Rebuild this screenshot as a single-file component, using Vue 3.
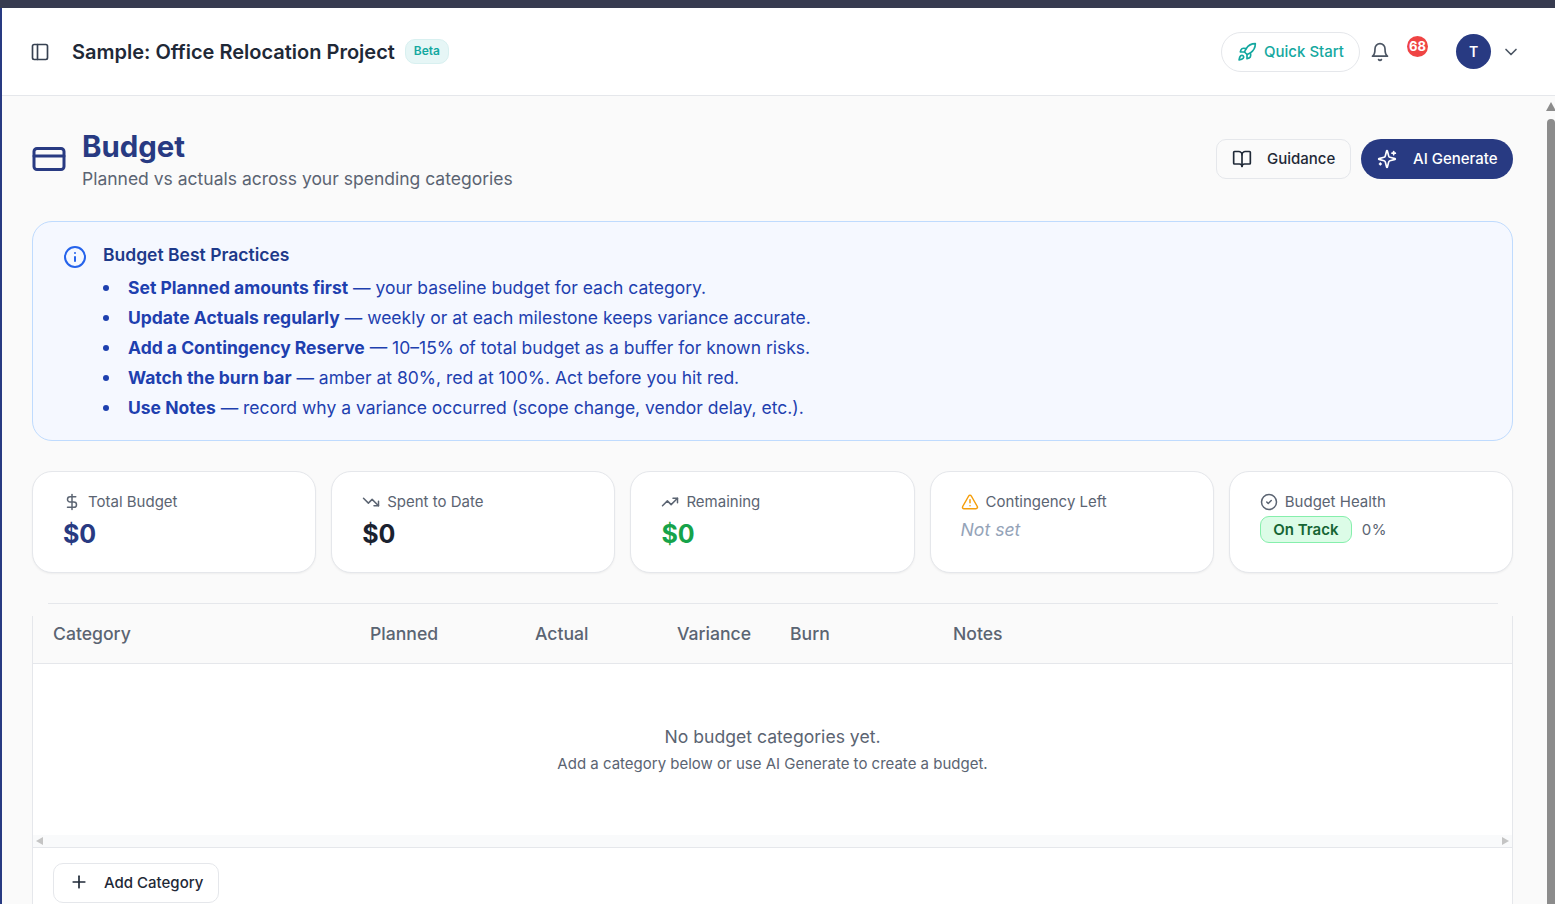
<template>
  <div class="app">
    <div class="top-strip"></div>
    <div class="shell">
      <header class="header">
        <div class="header-left">
          <svg class="ico panel-ico" viewBox="0 0 24 24"><rect x="3" y="3" width="18" height="18" rx="2" /><path d="M9 3v18" /></svg>
          <h1 class="project-title">Sample: Office Relocation Project</h1>
          <span class="beta">Beta</span>
        </div>
        <div class="header-right">
          <button class="quick-start">
            <svg class="ico rocket" viewBox="0 0 24 24"><path v-for="d in icons.rocket" :key="d" :d="d" /></svg>
            Quick Start
          </button>
          <div class="bell">
            <svg class="ico bell-ico" viewBox="0 0 24 24"><path v-for="d in icons.bell" :key="d" :d="d" /></svg>
            <span class="bell-count">68</span>
          </div>
          <div class="avatar">T</div>
          <svg class="ico chevron" viewBox="0 0 24 24"><path d="m6 9 6 6 6-6" /></svg>
        </div>
      </header>

      <div class="body-row">
        <main class="page">
          <section class="page-head">
            <div class="page-head-left">
              <svg class="ico card-ico" viewBox="0 0 24 24"><rect x="2" y="5" width="20" height="14" rx="2" /><path d="M2 10h20" /></svg>
              <div class="page-head-text">
                <h2 class="page-title">Budget</h2>
                <p class="page-sub">Planned vs actuals across your spending categories</p>
              </div>
            </div>
            <div class="page-actions">
              <button class="btn-guidance">
                <svg class="ico" viewBox="0 0 24 24"><path v-for="d in icons.book" :key="d" :d="d" /></svg>
                Guidance
              </button>
              <button class="btn-ai">
                <svg class="ico" viewBox="0 0 24 24"><path v-for="d in icons.sparkles" :key="d" :d="d" /></svg>
                AI Generate
              </button>
            </div>
          </section>

          <section class="tips">
            <svg class="ico info-ico" viewBox="0 0 24 24"><circle cx="12" cy="12" r="10" /><path d="M12 16v-4" /><path d="M12 8h.01" /></svg>
            <div>
              <h3 class="tips-title">Budget Best Practices</h3>
              <ul class="tips-list">
                <li v-for="tip in tips" :key="tip.lead"><strong>{{ tip.lead }}</strong> — {{ tip.rest }}</li>
              </ul>
            </div>
          </section>

          <section class="stats">
            <div class="stat" v-for="stat in stats" :key="stat.label">
              <div class="stat-label">
                <svg class="ico stat-ico" :class="stat.iconClass" viewBox="0 0 24 24"><path v-for="d in stat.icon" :key="d" :d="d" /></svg>
                {{ stat.label }}
              </div>
              <div v-if="stat.value" class="stat-value" :class="stat.valueClass">{{ stat.value }}</div>
              <div v-else-if="stat.empty" class="stat-empty">{{ stat.empty }}</div>
              <div v-else class="stat-health">
                <span class="on-track">On Track</span>
                <span class="percent">0%</span>
              </div>
            </div>
          </section>

          <div class="table-rule"></div>
          <section class="table-card">
            <div class="table-head">
              <span v-for="col in columns" :key="col">{{ col }}</span>
            </div>
            <div class="table-empty">
              <p class="empty-main">No budget categories yet.</p>
              <p class="empty-sub">Add a category below or use AI Generate to create a budget.</p>
            </div>
            <div class="h-scroll">
              <span class="arrow-left"></span>
              <span class="arrow-right"></span>
            </div>
            <div class="table-foot">
              <button class="btn-add">
                <svg class="ico" viewBox="0 0 24 24"><path d="M5 12h14" /><path d="M12 5v14" /></svg>
                Add Category
              </button>
            </div>
          </section>
        </main>

        <div class="v-scroll">
          <span class="arrow-up"></span>
          <span class="thumb"></span>
        </div>
      </div>
    </div>
  </div>
</template>

<script setup>
const icons = {
  rocket: [
    'M4.5 16.5c-1.5 1.26-2 5-2 5s3.74-.5 5-2c.71-.84.7-2.13-.09-2.91a2.18 2.18 0 0 0-2.91-.09z',
    'm12 15-3-3a22 22 0 0 1 2-3.95A12.88 12.88 0 0 1 22 2c0 2.72-.78 7.5-6 11a22.35 22.35 0 0 1-4 2z',
    'M9 12H4s.55-3.03 2-4c1.62-1.08 5 0 5 0',
    'M12 15v5s3.03-.55 4-2c1.08-1.62 0-5 0-5'
  ],
  bell: ['M6 8a6 6 0 0 1 12 0c0 7 3 9 3 9H3s3-2 3-9', 'M10.3 21a1.94 1.94 0 0 0 3.4 0'],
  book: [
    'M12 7v14',
    'M3 18a1 1 0 0 1-1-1V4a1 1 0 0 1 1-1h5a4 4 0 0 1 4 4 4 4 0 0 1 4-4h5a1 1 0 0 1 1 1v13a1 1 0 0 1-1 1h-6a3 3 0 0 0-3 3 3 3 0 0 0-3-3z'
  ],
  sparkles: [
    'M9.937 15.5A2 2 0 0 0 8.5 14.063l-6.135-1.582a.5.5 0 0 1 0-.962L8.5 9.936A2 2 0 0 0 9.937 8.5l1.582-6.135a.5.5 0 0 1 .963 0L14.063 8.5A2 2 0 0 0 15.5 9.937l6.135 1.581a.5.5 0 0 1 0 .964L15.5 14.063a2 2 0 0 0-1.437 1.437l-1.582 6.135a.5.5 0 0 1-.963 0z',
    'M20 3v4',
    'M22 5h-4',
    'M4 17v2',
    'M5 18H3'
  ]
}

const tips = [
  { lead: 'Set Planned amounts first', rest: 'your baseline budget for each category.' },
  { lead: 'Update Actuals regularly', rest: 'weekly or at each milestone keeps variance accurate.' },
  { lead: 'Add a Contingency Reserve', rest: '10–15% of total budget as a buffer for known risks.' },
  { lead: 'Watch the burn bar', rest: 'amber at 80%, red at 100%. Act before you hit red.' },
  { lead: 'Use Notes', rest: 'record why a variance occurred (scope change, vendor delay, etc.).' }
]

const stats = [
  {
    label: 'Total Budget',
    icon: ['M12 2v20', 'M17 5H9.5a3.5 3.5 0 0 0 0 7h5a3.5 3.5 0 0 1 0 7H6'],
    value: '$0',
    valueClass: 'navy'
  },
  {
    label: 'Spent to Date',
    icon: ['M22 17 13.5 8.5l-5 5L2 7', 'M16 17h6v-6'],
    value: '$0',
    valueClass: 'dark'
  },
  {
    label: 'Remaining',
    icon: ['M22 7 13.5 15.5l-5-5L2 17', 'M16 7h6v6'],
    value: '$0',
    valueClass: 'green'
  },
  {
    label: 'Contingency Left',
    icon: ['m21.73 18-8-14a2 2 0 0 0-3.48 0l-8 14A2 2 0 0 0 4 21h16a2 2 0 0 0 1.73-3', 'M12 9v4', 'M12 17h.01'],
    iconClass: 'amber',
    empty: 'Not set'
  },
  {
    label: 'Budget Health',
    icon: ['M22 12a10 10 0 1 1-20 0 10 10 0 0 1 20 0z', 'm9 12 2 2 4-4']
  }
]

const columns = ['Category', 'Planned', 'Actual', 'Variance', 'Burn', 'Notes']
</script>

<style>
html,
body {
  margin: 0;
  height: 100%;
  overflow: hidden;
}
</style>

<style scoped>
.app {
  height: 904px;
  overflow: hidden;
  font-family: Inter, "Liberation Sans", sans-serif;
  color: #1f2937;
  background: #fafafa;
}

.top-strip {
  height: 8px;
  background: #373b50;
}

.shell {
  height: 896px;
  border-left: 2px solid #283a82;
  box-sizing: border-box;
}

.ico {
  fill: none;
  stroke: currentColor;
  stroke-width: 2;
  stroke-linecap: round;
  stroke-linejoin: round;
  flex-shrink: 0;
}

button {
  font-family: inherit;
  cursor: pointer;
}

/* header */
.header {
  height: 88px;
  box-sizing: border-box;
  background: #fff;
  border-bottom: 1px solid #e5e7eb;
  display: flex;
  align-items: center;
  justify-content: space-between;
  padding: 0 34px 0 28px;
}

.header-left,
.header-right {
  display: flex;
  align-items: center;
}

.panel-ico {
  width: 20px;
  height: 20px;
  color: #374151;
}

.project-title {
  margin: 0 0 0 22px;
  font-size: 20px;
  font-weight: 600;
  color: #1f2937;
}

.beta {
  margin-left: 10px;
  height: 25px;
  width: 44px;
  box-sizing: border-box;
  padding-bottom: 2px;
  border: 1px solid #d8f0f0;
  border-radius: 10px;
  background: #e6f6f6;
  color: #14a8a0;
  font-size: 12px;
  font-weight: 600;
  display: flex;
  align-items: center;
  justify-content: center;
}

.quick-start {
  width: 139px;
  height: 40px;
  border: 1px solid #e5e7eb;
  border-radius: 20px;
  background: #fff;
  color: #14a8a0;
  font-size: 15px;
  font-weight: 500;
  display: flex;
  align-items: center;
  justify-content: center;
  gap: 7px;
  padding: 0;
}

.rocket {
  width: 20px;
  height: 20px;
}

.bell {
  position: relative;
  width: 20px;
  height: 20px;
  margin-left: 10px;
}

.bell-ico {
  width: 20px;
  height: 20px;
  color: #4b5563;
  display: block;
}

.bell-count {
  position: absolute;
  left: 37px;
  top: -6px;
  width: 21px;
  height: 21px;
  border-radius: 50%;
  background: #ef4444;
  color: #fff;
  font-size: 13px;
  font-weight: 700;
  display: flex;
  align-items: center;
  justify-content: center;
}

.avatar {
  margin-left: 66px;
  width: 35px;
  height: 35px;
  border-radius: 50%;
  background: #283a82;
  color: #fff;
  font-size: 14px;
  font-weight: 600;
  display: flex;
  align-items: center;
  justify-content: center;
}

.chevron {
  width: 20px;
  height: 20px;
  margin-left: 10px;
  color: #4b5563;
}

/* page */
.body-row {
  display: flex;
  height: 808px;
}

.page {
  flex: 1;
  min-width: 0;
  padding: 0 34px 0 30px;
  overflow: hidden;
}

.page-head {
  display: flex;
  align-items: center;
  justify-content: space-between;
  height: 125px;
}

.page-head-left {
  display: flex;
  align-items: center;
  gap: 15px;
}

.page-head-text {
  margin-top: 2px;
}

.card-ico {
  width: 36px;
  height: 36px;
  margin-left: -1px;
  color: #283a82;
}

.page-title {
  margin: 0;
  font-size: 29.4px;
  line-height: 36px;
  font-weight: 700;
  color: #283a82;
}

.page-sub {
  margin: 3px 0 0;
  font-size: 17.5px;
  line-height: 22px;
  color: #5b6472;
}

.page-actions {
  display: flex;
  gap: 10px;
}

.btn-guidance,
.btn-ai {
  height: 40px;
  font-size: 15px;
  font-weight: 500;
  display: flex;
  align-items: center;
  padding: 0;
}

.btn-guidance svg,
.btn-ai svg {
  width: 20px;
  height: 20px;
}

.btn-guidance {
  width: 135px;
  border: 1px solid #e5e7eb;
  border-radius: 10px;
  background: #fafafa;
  color: #1f2937;
  padding-left: 15px;
  gap: 15px;
}

.btn-ai {
  width: 152px;
  border: none;
  border-radius: 20px;
  background: #283a82;
  color: #fff;
  padding-left: 16px;
  gap: 16px;
}

/* best practices */
.tips {
  height: 220px;
  box-sizing: border-box;
  border: 1px solid #bfdbfe;
  border-radius: 20px;
  background: #f5f8ff;
  padding: 20px 30px;
  display: flex;
  gap: 16px;
}

.info-ico {
  width: 24px;
  height: 24px;
  margin-top: 3px;
  color: #2563eb;
}

.tips-title {
  margin: 0;
  font-size: 17.5px;
  line-height: 26px;
  font-weight: 600;
  color: #1e3a8a;
}

.tips-list {
  margin: 5px 0 0;
  padding-left: 25px;
  list-style: none;
  font-size: 17.5px;
  line-height: 30px;
  color: #1e40af;
}

.tips-list li::before {
  content: "";
  display: inline-block;
  width: 6px;
  height: 6px;
  margin: 0 19px 2px -25px;
  border-radius: 50%;
  background: currentColor;
  vertical-align: middle;
}

.tips-list strong {
  font-weight: 700;
}

/* stat cards */
.stats {
  margin-top: 30px;
  display: grid;
  grid-template-columns: repeat(5, 1fr);
  gap: 15px;
}

.stat {
  height: 102px;
  box-sizing: border-box;
  background: #fff;
  border: 1px solid #e5e7eb;
  border-radius: 20px;
  box-shadow: 0 1px 2px rgba(0, 0, 0, 0.05);
  padding: 20px 30px;
}

.stat-label {
  display: flex;
  align-items: center;
  gap: 7px;
  font-size: 15px;
  line-height: 20px;
  color: #5b6472;
}

.stat-ico {
  width: 18px;
  height: 18px;
}

.amber {
  color: #f59e0b;
}

.stat-value {
  margin-top: 6px;
  font-size: 25px;
  line-height: 32px;
  font-weight: 700;
}

.navy {
  color: #283a82;
}

.dark {
  color: #1a2230;
}

.green {
  color: #16a34a;
}

.stat-empty {
  margin-top: 6px;
  font-size: 17.6px;
  line-height: 24px;
  font-style: italic;
  color: #94a3b8;
}

.stat-health {
  margin-top: 4px;
  display: flex;
  align-items: center;
  gap: 10px;
}

.on-track {
  width: 92px;
  height: 27px;
  box-sizing: border-box;
  border: 1px solid #86efac;
  border-radius: 9px;
  background: #dcfce7;
  color: #166534;
  font-size: 15px;
  font-weight: 600;
  display: flex;
  align-items: center;
  justify-content: center;
}

.percent {
  font-size: 15px;
  letter-spacing: 0.5px;
  color: #5b6472;
}

/* table */
.table-rule {
  margin: 30px 15px 0 16px;
  height: 1px;
  background: #e5e7eb;
}

.table-card {
  position: relative;
  background: #fff;
}

.table-card::before,
.table-card::after {
  content: "";
  position: absolute;
  top: 12px;
  bottom: 0;
  width: 1px;
  background: #e5e7eb;
}

.table-card::before {
  left: 0;
}

.table-card::after {
  right: 0;
}

.table-head {
  height: 60px;
  box-sizing: border-box;
  background: #fafafa;
  border-bottom: 1px solid #e5e7eb;
  display: grid;
  grid-template-columns: 317px 165px 142px 113px 163px 1fr;
  align-items: center;
  padding-left: 21px;
  font-size: 17.6px;
  font-weight: 500;
  color: #5b6472;
}

.table-empty {
  height: 171px;
  box-sizing: border-box;
  padding-top: 60px;
  text-align: center;
}

.empty-main {
  margin: 0;
  font-size: 17.6px;
  line-height: 26px;
  color: #5b6472;
}

.empty-sub {
  margin: 3px 0 0;
  font-size: 15px;
  line-height: 22px;
  color: #5b6472;
}

.h-scroll {
  height: 12px;
  background: #f9fafb;
  border-bottom: 1px solid #e5e7eb;
  display: flex;
  align-items: center;
  justify-content: space-between;
  padding: 0 4px;
}

.arrow-left {
  border: 4.5px solid transparent;
  border-left: 0;
  border-right: 7px solid #c4c4c4;
}

.arrow-right {
  border: 4.5px solid transparent;
  border-right: 0;
  border-left: 7px solid #c4c4c4;
}

.table-foot {
  padding: 15px 21px;
}

.btn-add {
  width: 166px;
  height: 40px;
  border: 1px solid #e5e7eb;
  border-radius: 10px;
  background: #fff;
  color: #1f2937;
  font-size: 15px;
  font-weight: 500;
  display: flex;
  align-items: center;
  gap: 15px;
  padding: 0 0 2px 15px;
}

.btn-add svg {
  width: 20px;
  height: 20px;
}

/* page scrollbar */
.v-scroll {
  width: 8px;
  flex-shrink: 0;
  display: flex;
  flex-direction: column;
  align-items: center;
  padding-top: 6px;
}

.arrow-up {
  border: 5px solid transparent;
  border-top: 0;
  border-bottom: 9px solid #8c8c8c;
}

.thumb {
  margin-top: 8px;
  width: 8px;
  flex: 1;
  background: #8c8c8c;
  border-radius: 4px 4px 0 0;
}
</style>
